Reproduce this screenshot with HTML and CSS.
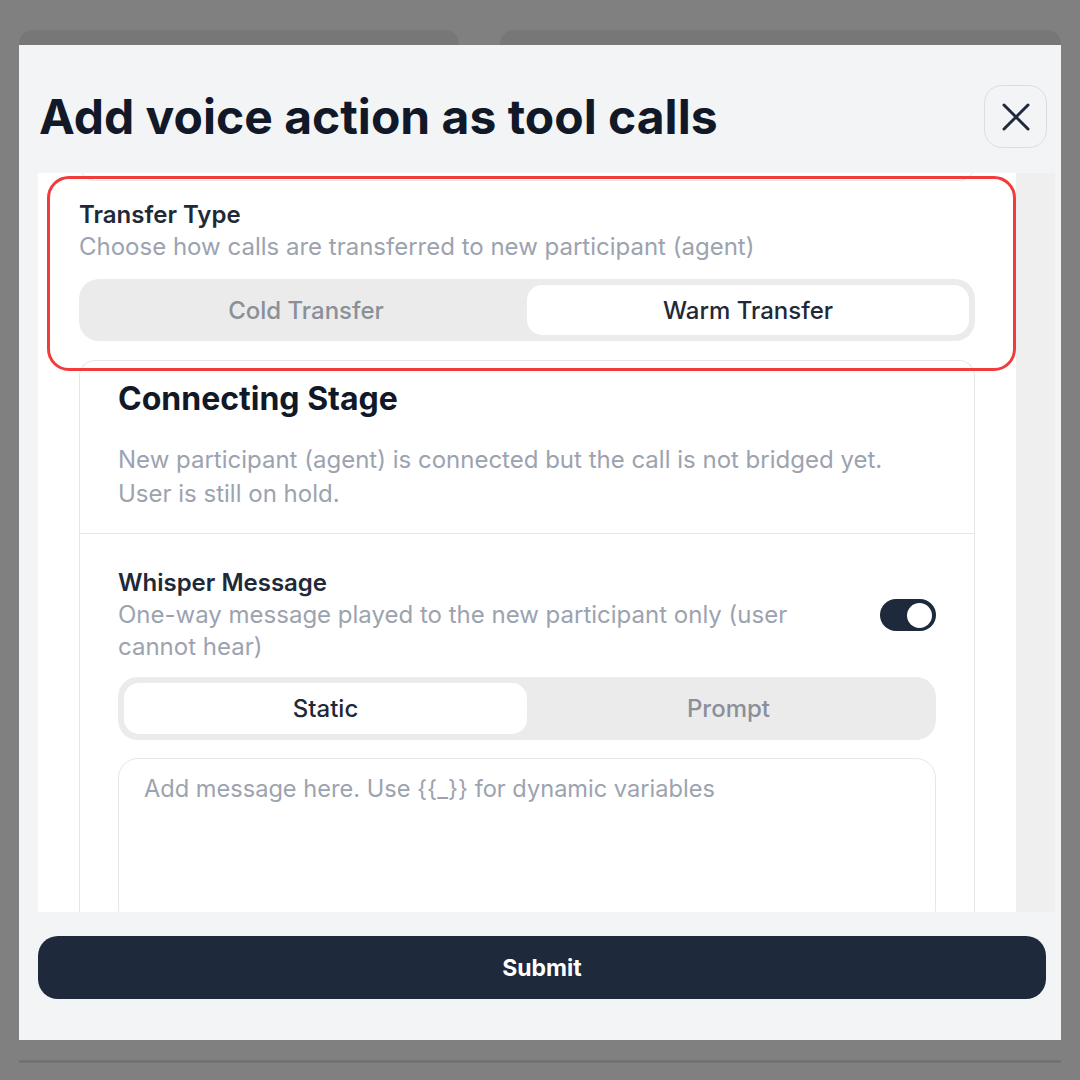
FILE: index.html
```html
<!DOCTYPE html>
<html lang="en">
<head>
<meta charset="utf-8">
<title>Add voice action as tool calls</title>
<link rel="stylesheet" href="styles.css">
</head>
<body>
<div class="backdrop">
  <div class="bg-tabs">
    <div class="bg-tab tab-a"></div>
    <div class="bg-tab tab-b"></div>
  </div>
  <div class="bg-rule"></div>
</div>

<div class="modal">
  <header class="modal-header">
    <h1 class="modal-title">Add voice action as tool calls</h1>
    <button class="close-btn" aria-label="Close">
      <svg width="28" height="28" viewBox="0 0 28 28" fill="none" stroke="#1e293b" stroke-width="3" stroke-linecap="round">
        <path d="M2 2 L26 26 M26 2 L2 26"/>
      </svg>
    </button>
  </header>

  <div class="scroll">
    <div class="scroll-content">
      <div class="prev-card"></div>

      <section class="transfer">
        <div class="label">Transfer Type</div>
        <div class="hint transfer-hint">Choose how calls are transferred to new participant (agent)</div>
        <div class="segment seg-transfer">
          <span class="seg-opt">Cold Transfer</span>
          <span class="seg-opt active">Warm Transfer</span>
        </div>
      </section>

      <div class="stage-card">
        <div class="stage-head">
          <h2 class="stage-title">Connecting Stage</h2>
          <p class="stage-desc">New participant (agent) is connected but the call is not bridged yet.<br>User is still on hold.</p>
        </div>
        <div class="whisper">
          <div class="whisper-row">
            <div class="whisper-text">
              <div class="label">Whisper Message</div>
              <div class="hint whisper-hint">One-way message played to the new participant only (user cannot hear)</div>
            </div>
            <div class="toggle"><span class="knob"></span></div>
          </div>
          <div class="segment seg-mode">
            <span class="seg-opt active">Static</span>
            <span class="seg-opt">Prompt</span>
          </div>
          <div class="textarea"><span class="placeholder">Add message here. Use {{_}} for dynamic variables</span></div>
        </div>
      </div>
    </div>
    <div class="scrollbar"></div>
  </div>

  <footer class="modal-footer">
    <button class="submit-btn">Submit</button>
  </footer>

  <div class="highlight"></div>
</div>
</body>
</html>
```

FILE: styles.css
```css
* { box-sizing: border-box; }

html, body {
  margin: 0;
  padding: 0;
}

body {
  width: 1080px;
  height: 1080px;
  background: #808080;
  font-family: Inter, "Noto Sans", "Liberation Sans", sans-serif;
  position: relative;
  overflow: hidden;
}

/* page behind the dimmed overlay */
.backdrop {
  height: 1080px;
  padding: 30px 19px 0 19px;
  display: flex;
  flex-direction: column;
}

.bg-tabs {
  display: flex;
  gap: 41px;
  height: 40px;
}

.bg-tab {
  background: #777777;
  border-radius: 14px 14px 0 0;
}

.tab-a { width: 440px; }
.tab-b { flex: 1; }

.bg-rule {
  margin-top: 990px;
  height: 3px;
  background: #727272;
}

/* modal */
.modal {
  position: absolute;
  left: 19px;
  top: 45px;
  width: 1042px;
  height: 995px;
  background: #f3f4f6;
  display: flex;
  flex-direction: column;
}

.modal-header {
  height: 128px;
  flex: none;
  display: flex;
  justify-content: space-between;
  align-items: flex-start;
  padding: 40px 14px 0 20px;
}

.modal-title {
  margin: 4px 0 0 0;
  font-size: 48px;
  line-height: 56px;
  font-weight: 700;
  color: #111827;
  letter-spacing: 0;
}

.close-btn {
  width: 63px;
  height: 63px;
  border: 1px solid #dcdde0;
  border-radius: 18px;
  background: transparent;
  display: flex;
  align-items: center;
  justify-content: center;
  padding: 0;
}

.scroll {
  height: 739px;
  flex: none;
  margin: 0 6px 0 19px;
  display: flex;
  overflow: hidden;
}

.scroll-content {
  flex: 1;
  background: #ffffff;
  padding: 0 41px;
  display: flex;
  flex-direction: column;
  gap: 19px;
  overflow: hidden;
}

.scrollbar {
  width: 39px;
  flex: none;
  background: #efefef;
}

.prev-card {
  flex: none;
  height: 30px;
  margin-top: -22px;
  border: 1px solid #e5e7eb;
  border-top: none;
  border-radius: 0 0 16px 16px;
}

.label {
  font-size: 24px;
  line-height: 30px;
  font-weight: 600;
  color: #1f2937;
}

.hint {
  font-size: 24px;
  line-height: 30px;
  font-weight: 400;
  color: #9ca3af;
}

.transfer-hint {
  margin-top: 2px;
}

.segment {
  display: grid;
  grid-template-columns: 1fr 1fr;
  padding: 6px;
  background: #ebebeb;
  border-radius: 20px;
}

.seg-transfer {
  height: 62px;
  margin-top: 17px;
}

.seg-opt {
  display: flex;
  align-items: center;
  justify-content: center;
  border-radius: 15px;
  font-size: 24px;
  font-weight: 500;
  color: #8a9099;
}

.seg-opt.active {
  background: #ffffff;
  color: #1f2937;
}

.stage-card {
  flex: none;
  border: 1px solid #e5e7eb;
  border-bottom: none;
  border-radius: 16px 16px 0 0;
}

.stage-head {
  padding: 20px 38px 22px 38px;
  border-bottom: 1px solid #e5e7eb;
}

.stage-title {
  margin: 0;
  font-size: 32px;
  line-height: 36px;
  font-weight: 700;
  color: #111827;
}

.stage-desc {
  margin: 26px 0 0 0;
  font-size: 24px;
  line-height: 34px;
  color: #9ca3af;
}

.whisper {
  padding: 33px 38px 0 38px;
}

.whisper-row {
  display: flex;
  align-items: center;
  justify-content: space-between;
  gap: 20px;
}

.whisper-text {
  max-width: 720px;
}

.whisper-hint {
  line-height: 32px;
}

.whisper-text .label {
  line-height: 32px;
}

.toggle {
  width: 56px;
  height: 32px;
  flex: none;
  border-radius: 16px;
  background: #1e293b;
  display: flex;
  align-items: center;
  justify-content: flex-end;
  padding: 0 4px;
}

.knob {
  width: 25px;
  height: 25px;
  border-radius: 50%;
  background: #ffffff;
}

.seg-mode {
  height: 63px;
  margin-top: 14px;
}

.textarea {
  margin-top: 18px;
  height: 170px;
  border: 1px solid #e5e7eb;
  border-radius: 20px;
  padding: 15px 25px;
}

.placeholder {
  font-size: 23.6px;
  line-height: 30px;
  color: #9ca3af;
}

.modal-footer {
  flex: 1;
  padding: 24px 15px 0 19px;
}

.submit-btn {
  width: 100%;
  height: 63px;
  border: none;
  border-radius: 20px;
  background: #1e293b;
  color: #ffffff;
  font-family: Inter, "Noto Sans", "Liberation Sans", sans-serif;
  font-size: 23px;
  font-weight: 700;
}

/* annotation overlay */
.highlight {
  position: absolute;
  left: 28px;
  top: 131px;
  width: 969px;
  height: 195px;
  border: 3px solid #f23c3c;
  border-radius: 22px;
  pointer-events: none;
}
```
